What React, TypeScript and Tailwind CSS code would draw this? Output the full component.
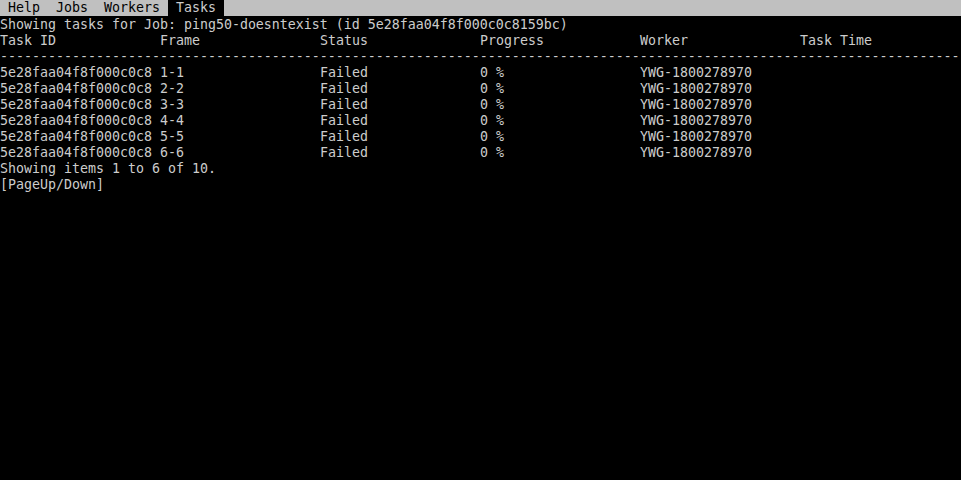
import React from 'react';

const tabs = [
  { name: 'Help', active: false },
  { name: 'Jobs', active: false },
  { name: 'Workers', active: false },
  { name: 'Tasks', active: true },
];

const columns = ['Task ID', 'Frame', 'Status', 'Progress', 'Worker', 'Task Time'];

const tasks = [1, 2, 3, 4, 5, 6].map((n) => ({
  id: '5e28faa04f8f000c0c8',
  frame: `${n}-${n}`,
  status: 'Failed',
  progress: '0 %',
  worker: 'YWG-1800278970',
  time: '',
}));

const Row = ({ cells }: { cells: string[] }) => (
  <div className="grid grid-cols-[160px_160px_160px_160px_160px_1fr] h-4">
    {cells.map((c, i) => (
      <span key={i} className="whitespace-pre">
        {c}
      </span>
    ))}
  </div>
);

const App = () => {
  return (
    <div
      className="w-[961px] h-[480px] bg-black text-[#cccccc] text-[13.29px] leading-4 overflow-hidden"
      style={{ fontFamily: '"DejaVu Sans Mono", "Liberation Mono", monospace' }}
    >
      <div className="flex h-4 bg-[#c0c0c0] text-black">
        {tabs.map((tab) => (
          <span
            key={tab.name}
            className={`whitespace-pre ${tab.active ? 'bg-black text-[#cccccc]' : ''}`}
          >
            {` ${tab.name} `}
          </span>
        ))}
      </div>
      <div className="pt-px">
        <div className="h-4 whitespace-pre">Showing tasks for Job: ping50-doesntexist (id 5e28faa04f8f000c0c8159bc)</div>
        <Row cells={columns} />
        <div className="h-4 whitespace-pre overflow-hidden">{'-'.repeat(120)}</div>
        {tasks.map((t) => (
          <Row key={t.frame} cells={[t.id, t.frame, t.status, t.progress, t.worker, t.time]} />
        ))}
        <div className="h-4 whitespace-pre">Showing items 1 to 6 of 10.</div>
        <div className="h-4 whitespace-pre">[PageUp/Down]</div>
      </div>
    </div>
  );
};

export default App;
